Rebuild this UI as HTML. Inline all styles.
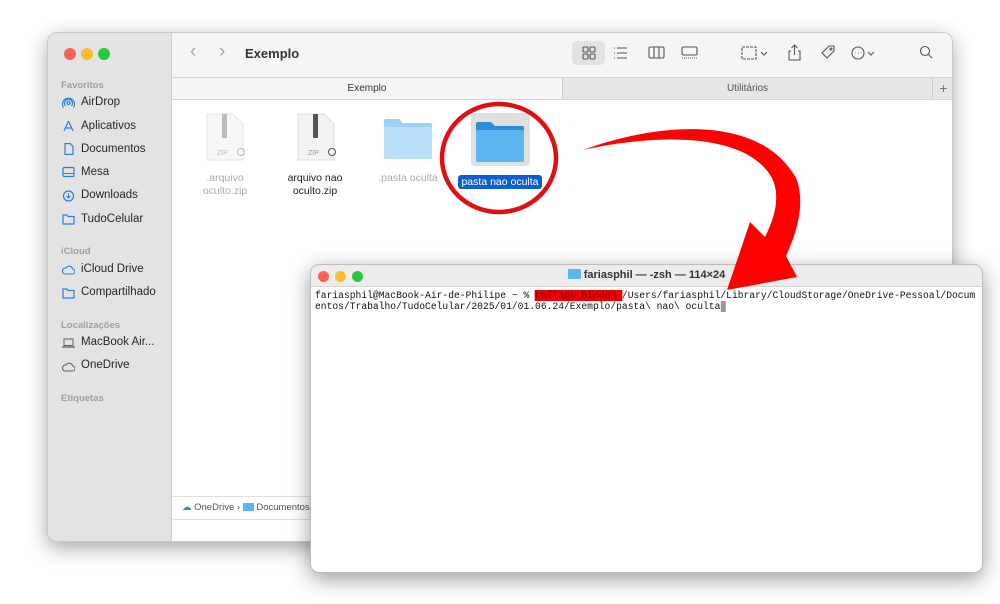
<!DOCTYPE html>
<html><head><meta charset="utf-8"><style>
*{margin:0;padding:0;box-sizing:border-box}
body{width:1000px;height:604px;background:#fff;position:relative;overflow:hidden;font-family:"Liberation Sans",sans-serif}
.abs{position:absolute}
#finder{left:47px;top:32px;width:906px;height:510px;border-radius:10px;background:#fff;box-shadow:0 6px 20px rgba(0,0,0,.35);overflow:hidden;border:1px solid #c9c9c9}
#side{left:0;top:0;width:124px;height:100%;background:#e3e3e3;border-right:1px solid #d0d0d0}
.dot{width:12px;height:12px;border-radius:50%;position:absolute}
.sh{font-size:9.5px;color:#a0a0a0;font-weight:bold;position:absolute;left:13px}
.si{font-size:11.5px;color:#262626;position:absolute;left:33px}
.ic{position:absolute;left:14px;width:13px;height:12px}
#tb{left:124px;top:0;right:0;height:44px;background:#f5f5f5}
#tabs{left:124px;top:44px;right:0;height:23px;background:#e6e6e6;border-top:1px solid #d6d6d6;border-bottom:1px solid #d6d6d6}
.lbl{font-size:10.5px;text-align:center;position:absolute;width:90px;line-height:13px}
#term{left:310px;top:264px;width:673px;height:309px;background:#fff;border-radius:9px;box-shadow:0 6px 22px rgba(0,0,0,.4);border:1px solid #bdbdbd;overflow:hidden}
.tl{font-family:"Liberation Mono",monospace;font-size:9.8px;color:#111;position:absolute;left:4px;white-space:pre;transform:scaleX(.985);transform-origin:left}
</style></head><body>
<div id="finder" class="abs">
 <div id="side" class="abs">
  <div class="dot" style="left:16px;top:15px;background:#fe5f57"></div>
  <div class="dot" style="left:33px;top:15px;background:#febc2e"></div>
  <div class="dot" style="left:50px;top:15px;background:#28c840"></div>
  <div class="sh" style="top:47px">Favoritos</div>
  <svg class="ic" style="top:64px" viewBox="0 0 13 12"><g fill="none" stroke="#2f7fd8" stroke-width="1.2"><circle cx="6.5" cy="6" r="1.5"/><path d="M3.5 9a4 4 0 1 1 6 0M1.5 10.5a6 6 0 1 1 10 0"/></g></svg><div class="si" style="top:63px">AirDrop</div>
  <svg class="ic" style="top:87px" viewBox="0 0 13 12"><path d="M6.5 1L2 11M6.5 1L11 11M3 8h7" stroke="#2f7fd8" stroke-width="1.2" fill="none"/></svg><div class="si" style="top:87px">Aplicativos</div>
  <svg class="ic" style="top:110px" viewBox="0 0 13 12"><path d="M3 .5h5l3 3V11.5H3z" stroke="#2f7fd8" stroke-width="1.2" fill="none"/></svg><div class="si" style="top:110px">Documentos</div>
  <svg class="ic" style="top:133px" viewBox="0 0 13 12"><rect x="1" y="1.5" width="11" height="9" rx="1" stroke="#2f7fd8" stroke-width="1.2" fill="none"/><path d="M1 7.5h11" stroke="#2f7fd8"/></svg><div class="si" style="top:133px">Mesa</div>
  <svg class="ic" style="top:157px" viewBox="0 0 13 12"><circle cx="6.5" cy="6" r="5" stroke="#2f7fd8" stroke-width="1.2" fill="none"/><path d="M6.5 3v5M4.5 6l2 2 2-2" stroke="#2f7fd8" fill="none"/></svg><div class="si" style="top:156px">Downloads</div>
  <svg class="ic" style="top:180px" viewBox="0 0 13 12"><path d="M1 2h4l1 1.5h6V11H1z" stroke="#2f7fd8" stroke-width="1.2" fill="none"/></svg><div class="si" style="top:180px">TudoCelular</div>
  <div class="sh" style="top:213px">iCloud</div>
  <svg class="ic" style="top:231px" viewBox="0 0 13 12"><path d="M3 10h7.5a2.5 2.5 0 0 0 0-5 3.5 3.5 0 0 0-6.5-1A3 3 0 0 0 3 10z" stroke="#2f7fd8" stroke-width="1.1" fill="none"/></svg><div class="si" style="top:230px">iCloud Drive</div>
  <svg class="ic" style="top:254px" viewBox="0 0 13 12"><path d="M1 2h4l1 1.5h6V11H1z" stroke="#2f7fd8" stroke-width="1.2" fill="none"/></svg><div class="si" style="top:253px">Compartilhado</div>
  <div class="sh" style="top:287px">Localizações</div>
  <svg class="ic" style="top:304px" viewBox="0 0 13 12"><rect x="2" y="2" width="9" height="6.5" stroke="#666" fill="none"/><path d="M0 10h13" stroke="#666" stroke-width="1.4"/></svg><div class="si" style="top:303px">MacBook Air...</div>
  <svg class="ic" style="top:328px" viewBox="0 0 13 12"><path d="M3 10h7.5a2.5 2.5 0 0 0 0-5 3.5 3.5 0 0 0-6.5-1A3 3 0 0 0 3 10z" stroke="#666" stroke-width="1.1" fill="none"/></svg><div class="si" style="top:326px">OneDrive</div>
  <div class="sh" style="top:360px">Etiquetas</div>
 </div>
 <div id="tb" class="abs">
  <div class="abs" style="left:18px;top:8px;font-size:19px;color:#aaa">‹</div>
  <div class="abs" style="left:47px;top:8px;font-size:19px;color:#aaa">›</div>
  <div class="abs" style="left:73px;top:13px;font-size:13px;font-weight:bold;color:#333">Exemplo</div>
  <div class="abs" style="left:400px;top:8px;width:33px;height:24px;background:#e2e2e2;border-radius:5px"></div>
  <svg class="abs" style="left:400px;top:8px" width="560" height="24" viewBox="0 0 560 24" fill="none" stroke="#555" stroke-width="1.1">
   <rect x="11" y="6" width="5" height="5" rx="1"/><rect x="18" y="6" width="5" height="5" rx="1"/><rect x="11" y="13" width="5" height="5" rx="1"/><rect x="18" y="13" width="5" height="5" rx="1"/>
   <path d="M45 7h10M45 12h10M45 17h10M42 7h1M42 12h1M42 17h1"/>
   <rect x="77" y="6" width="15" height="11" rx="1.5"/><path d="M82 6v11M87 6v11"/>
   <rect x="110" y="6" width="15" height="8" rx="1.5"/><path d="M110 17h15" stroke-dasharray="1 1"/>
   <rect x="170" y="6" width="14" height="12" stroke-dasharray="3 1"/><path d="M189 11l3 3 3-3"/>
   <path d="M219 10h-2v9h11v-9h-2M222.5 14V4M219.5 7l3-3 3 3"/>
   <path d="M250 12l7-7h5v5l-7 7z"/><circle cx="259" cy="8" r="1"/>
   <circle cx="286" cy="12" r="6"/><path d="M283 12h.5M286 12h.5M289 12h.5M296 11l3 3 3-3"/>
   <circle cx="353" cy="10" r="4.5"/><path d="M356.5 13.5l3.5 3.5"/>
  </svg>
 </div>
 <div id="tabs" class="abs">
  <div class="abs" style="left:0;width:390px;top:0;height:21px;background:#f5f5f5;font-size:10px;color:#333;text-align:center;line-height:21px">Exemplo</div>
  <div class="abs" style="left:390px;width:370px;top:0;height:21px;border-left:1px solid #ccc;font-size:10px;color:#555;text-align:center;line-height:21px">Utilitários</div>
  <div class="abs" style="left:760px;width:22px;top:0;height:21px;border-left:1px solid #ccc;font-size:14px;color:#777;text-align:center;line-height:20px">+</div>
 </div>
 <svg class="abs" style="left:157px;top:79px" width="40" height="50"><path d="M2 2h26l10 10v36H2z" fill="#f7f7f7" stroke="#e4e4e4"/><rect x="17" y="2" width="5" height="24" fill="#bbb"/><text x="12" y="43" font-size="7" fill="#bbb" font-family="Liberation Sans">ZIP</text><circle cx="36" cy="40" r="3.5" fill="none" stroke="#bbb"/></svg>
 <div class="lbl" style="left:132px;top:139px;color:#aaa">.arquivo<br>oculto.zip</div>
 <svg class="abs" style="left:248px;top:79px" width="40" height="50"><path d="M2 2h26l10 10v36H2z" fill="#f3f3f3" stroke="#ddd"/><rect x="17" y="2" width="5" height="24" fill="#555"/><text x="12" y="43" font-size="7" fill="#999" font-family="Liberation Sans">ZIP</text><circle cx="36" cy="40" r="3.5" fill="none" stroke="#555"/></svg>
 <div class="lbl" style="left:222px;top:139px;color:#222">arquivo nao<br>oculto.zip</div>
 <svg class="abs" style="left:334px;top:84px" width="52" height="44"><path d="M2 4a2 2 0 0 1 2-2h13l4 4h27a2 2 0 0 1 2 2v32a2 2 0 0 1-2 2H4a2 2 0 0 1-2-2z" fill="#9dd0f2"/><rect x="2" y="10" width="48" height="32" rx="2" fill="#b9e0fa"/></svg>
 <div class="lbl" style="left:315px;top:139px;color:#aaa">.pasta oculta</div>
 <div class="abs" style="left:423px;top:80px;width:59px;height:53px;background:#e0e0e0;border-radius:4px"></div>
 <svg class="abs" style="left:426px;top:87px" width="52" height="44"><path d="M2 4a2 2 0 0 1 2-2h13l4 4h27a2 2 0 0 1 2 2v32a2 2 0 0 1-2 2H4a2 2 0 0 1-2-2z" fill="#2a8fd6"/><rect x="2" y="10" width="48" height="32" rx="2" fill="#5bb6ef"/></svg>
 <div class="abs" style="left:410px;top:142px;width:84px;height:14px;background:#0b5fd0;border-radius:3px;color:#fff;font-size:10.5px;text-align:center;line-height:14px">pasta nao oculta</div>
 <div class="abs" style="left:124px;top:463px;right:0;height:24px;border-top:1px solid #e0e0e0;border-bottom:1px solid #e0e0e0;font-size:9.5px;color:#555;line-height:22px;padding-left:10px"><span style="color:#2a8fd6">☁</span> OneDrive › <span style="display:inline-block;width:11px;height:8px;background:#5bb6ef;vertical-align:-1px"></span> Documentos</div>
</div>
<div id="term" class="abs">
 <div class="abs" style="left:0;top:0;right:0;height:22px;background:#ececec;border-bottom:1px solid #d5d5d5"></div>
 <div class="dot" style="left:7px;top:6px;background:#fe5f57;width:11px;height:11px"></div>
 <div class="dot" style="left:24px;top:6px;background:#febc2e;width:11px;height:11px"></div>
 <div class="dot" style="left:41px;top:6px;background:#28c840;width:11px;height:11px"></div>
 <div class="abs" style="left:0;right:0;top:4px;text-align:center;font-size:11px;font-weight:bold;color:#333"><span style="display:inline-block;width:13px;height:10px;background:#5bb6ef;border-radius:1px;vertical-align:-1px;margin-right:3px"></span>fariasphil — -zsh — 114×24</div>
 <div class="tl" style="top:25px">fariasphil@MacBook-Air-de-Philipe ~ % <span style="background:#e00;color:#600">chflags hidden </span>/Users/fariasphil/Library/CloudStorage/OneDrive-Pessoal/Docum</div>
 <div class="tl" style="top:36px">entos/Trabalho/TudoCelular/2025/01/01.06.24/Exemplo/pasta\ nao\ oculta<span style="background:#999"> </span></div>
</div>
<svg class="abs" style="left:0;top:0" width="1000" height="604">
 <ellipse cx="499" cy="158" rx="57" ry="54" fill="none" stroke="#e01010" stroke-width="4.5"/>
 <path d="M583 150 C650 125 760 110 797 180 C805 205 797 232 786 256 L797 277 L727 290 L750 222 L765 237 C776 215 780 195 772 178 C745 130 650 135 583 150 Z" fill="#f00"/>
</svg>
</body></html>
